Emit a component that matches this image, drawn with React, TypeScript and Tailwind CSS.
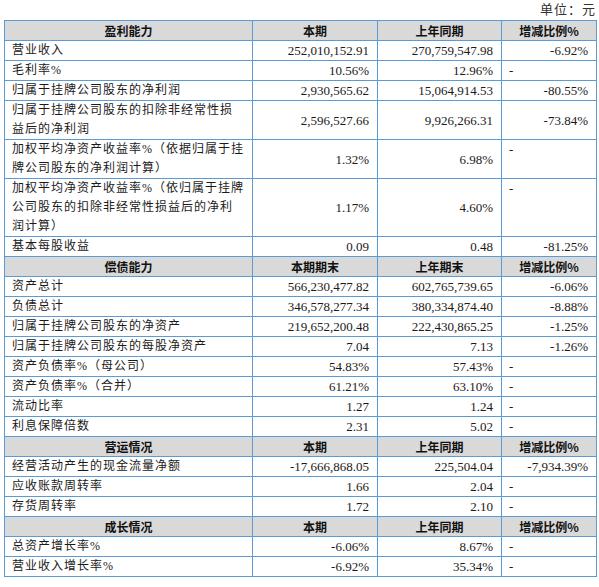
import React from "react";

type Row = {
  label: string[];
  cur: string;
  prev: string;
  change: string;
  dashTop?: boolean;
};

type Section = {
  title: string;
  heads: [string, string, string];
  rows: Row[];
};

const SECTIONS: Section[] = [
  {
    title: "盈利能力",
    heads: ["本期", "上年同期", "增减比例%"],
    rows: [
      { label: ["营业收入"], cur: "252,010,152.91", prev: "270,759,547.98", change: "-6.92%" },
      { label: ["毛利率%"], cur: "10.56%", prev: "12.96%", change: "-" },
      { label: ["归属于挂牌公司股东的净利润"], cur: "2,930,565.62", prev: "15,064,914.53", change: "-80.55%" },
      {
        label: ["归属于挂牌公司股东的扣除非经常性损", "益后的净利润"],
        cur: "2,596,527.66",
        prev: "9,926,266.31",
        change: "-73.84%",
      },
      {
        label: ["加权平均净资产收益率%（依据归属于挂", "牌公司股东的净利润计算）"],
        cur: "1.32%",
        prev: "6.98%",
        change: "-",
        dashTop: true,
      },
      {
        label: ["加权平均净资产收益率%（依归属于挂牌", "公司股东的扣除非经常性损益后的净利", "润计算）"],
        cur: "1.17%",
        prev: "4.60%",
        change: "-",
        dashTop: true,
      },
      { label: ["基本每股收益"], cur: "0.09", prev: "0.48", change: "-81.25%" },
    ],
  },
  {
    title: "偿债能力",
    heads: ["本期期末", "上年期末", "增减比例%"],
    rows: [
      { label: ["资产总计"], cur: "566,230,477.82", prev: "602,765,739.65", change: "-6.06%" },
      { label: ["负债总计"], cur: "346,578,277.34", prev: "380,334,874.40", change: "-8.88%" },
      { label: ["归属于挂牌公司股东的净资产"], cur: "219,652,200.48", prev: "222,430,865.25", change: "-1.25%" },
      { label: ["归属于挂牌公司股东的每股净资产"], cur: "7.04", prev: "7.13", change: "-1.26%" },
      { label: ["资产负债率%（母公司）"], cur: "54.83%", prev: "57.43%", change: "-" },
      { label: ["资产负债率%（合并）"], cur: "61.21%", prev: "63.10%", change: "-" },
      { label: ["流动比率"], cur: "1.27", prev: "1.24", change: "-" },
      { label: ["利息保障倍数"], cur: "2.31", prev: "5.02", change: "-" },
    ],
  },
  {
    title: "营运情况",
    heads: ["本期", "上年同期", "增减比例%"],
    rows: [
      { label: ["经营活动产生的现金流量净额"], cur: "-17,666,868.05", prev: "225,504.04", change: "-7,934.39%" },
      { label: ["应收账款周转率"], cur: "1.66", prev: "2.04", change: "-" },
      { label: ["存货周转率"], cur: "1.72", prev: "2.10", change: "-" },
    ],
  },
  {
    title: "成长情况",
    heads: ["本期", "上年同期", "增减比例%"],
    rows: [
      { label: ["总资产增长率%"], cur: "-6.06%", prev: "8.67%", change: "-" },
      { label: ["营业收入增长率%"], cur: "-6.92%", prev: "35.34%", change: "-" },
    ],
  },
];

const cell = "border border-[#5b9bd5] p-0 leading-[19px]";
const head = `${cell} bg-[#d9d9d9] text-center font-bold text-[12px] text-[#111] font-['Noto_Sans_CJK_SC',sans-serif]`;
const num = `${cell} text-right pr-[8px] align-middle text-[13px] font-['Liberation_Serif','Noto_Sans_CJK_SC',serif]`;

export default function App() {
  return (
    <div className="w-[599px] h-[587px] bg-white text-[#1a1a1a]">
      <div className="w-[596px] h-[20px] text-right text-[13px] leading-[20px] text-[#333] font-['Liberation_Serif','Noto_Sans_CJK_SC',serif] tracking-[1px]">
        单位：元
      </div>
      <table className="ml-[4px] w-[592px] table-fixed border-collapse">
        <colgroup>
          <col className="w-[248px]" />
          <col className="w-[125px]" />
          <col className="w-[124px]" />
          <col className="w-[95px]" />
        </colgroup>
        <tbody>
          {SECTIONS.map((sec) => (
            <React.Fragment key={sec.title}>
              <tr>
                <td className={head}>{sec.title}</td>
                {sec.heads.map((h) => (
                  <td key={h} className={head}>
                    {h}
                  </td>
                ))}
              </tr>
              {sec.rows.map((row) => (
                <tr key={row.label.join("")}>
                  <td
                    className={`${cell} pl-[7px] text-[12px] tracking-[1px] font-['Liberation_Serif','Noto_Sans_CJK_SC',serif] ${
                      row.label.length > 1 ? "leading-[19.5px]" : ""
                    }`}
                  >
                    {row.label.map((line, i) => (
                      <div key={i} className="whitespace-nowrap">
                        {line}
                      </div>
                    ))}
                  </td>
                  <td className={num}>{row.cur}</td>
                  <td className={num}>{row.prev}</td>
                  {row.change === "-" ? (
                    <td
                      className={`${cell} pl-[7px] text-left text-[13px] font-['Liberation_Serif',serif] ${
                        row.dashTop ? "align-top" : "align-middle"
                      }`}
                    >
                      -
                    </td>
                  ) : (
                    <td className={num}>{row.change}</td>
                  )}
                </tr>
              ))}
            </React.Fragment>
          ))}
        </tbody>
      </table>
    </div>
  );
}
